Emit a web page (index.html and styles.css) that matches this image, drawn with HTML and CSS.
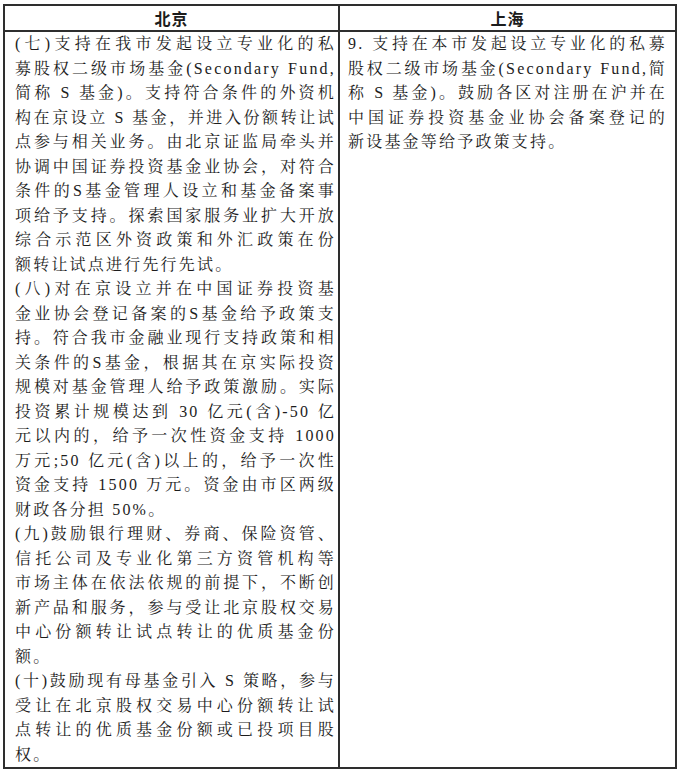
FILE: index.html
```html
<!DOCTYPE html>
<html lang="zh-CN">
<head>
<meta charset="utf-8">
<title>北京 上海 S基金政策对比</title>
<link rel="stylesheet" href="styles.css">
</head>
<body>
<div class="page">
<table class="compare">
<colgroup><col class="col-bj"><col class="col-sh"></colgroup>
<thead>
<tr><th>北京</th><th>上海</th></tr>
</thead>
<tbody>
<tr>
<td class="cell cell-left">
<p class="para">
<span class="ln">(七)支持在我市发起设立专业化的私</span>
<span class="ln">募股权二级市场基金(Secondary Fund,</span>
<span class="ln">简称 S 基金)。支持符合条件的外资机</span>
<span class="ln">构在京设立 S 基金，并进入份额转让试</span>
<span class="ln">点参与相关业务。由北京证监局牵头并</span>
<span class="ln">协调中国证券投资基金业协会，对符合</span>
<span class="ln">条件的S基金管理人设立和基金备案事</span>
<span class="ln">项给予支持。探索国家服务业扩大开放</span>
<span class="ln">综合示范区外资政策和外汇政策在份</span>
<span class="ln last">额转让试点进行先行先试。</span>
</p>
<p class="para">
<span class="ln">(八)对在京设立并在中国证券投资基</span>
<span class="ln">金业协会登记备案的S基金给予政策支</span>
<span class="ln">持。符合我市金融业现行支持政策和相</span>
<span class="ln">关条件的S基金，根据其在京实际投资</span>
<span class="ln">规模对基金管理人给予政策激励。实际</span>
<span class="ln">投资累计规模达到 30 亿元(含)-50 亿</span>
<span class="ln">元以内的，给予一次性资金支持 1000</span>
<span class="ln">万元;50 亿元(含)以上的，给予一次性</span>
<span class="ln">资金支持 1500 万元。资金由市区两级</span>
<span class="ln last">财政各分担 50%。</span>
</p>
<p class="para">
<span class="ln">(九)鼓励银行理财、券商、保险资管、</span>
<span class="ln">信托公司及专业化第三方资管机构等</span>
<span class="ln">市场主体在依法依规的前提下，不断创</span>
<span class="ln">新产品和服务，参与受让北京股权交易</span>
<span class="ln">中心份额转让试点转让的优质基金份</span>
<span class="ln last">额。</span>
</p>
<p class="para">
<span class="ln">(十)鼓励现有母基金引入 S 策略，参与</span>
<span class="ln">受让在北京股权交易中心份额转让试</span>
<span class="ln">点转让的优质基金份额或已投项目股</span>
<span class="ln last">权。</span>
</p>
</td>
<td class="cell cell-right">
<p class="para">
<span class="ln">9. 支持在本市发起设立专业化的私募</span>
<span class="ln">股权二级市场基金(Secondary Fund,简</span>
<span class="ln">称 S 基金)。鼓励各区对注册在沪并在</span>
<span class="ln">中国证券投资基金业协会备案登记的</span>
<span class="ln last">新设基金等给予政策支持。</span>
</p>
</td>
</tr>
</tbody>
</table>
</div>
</body>
</html>
```

FILE: styles.css
```css
html, body {
  margin: 0;
  padding: 0;
  background: #ffffff;
}

.page {
  padding: 4px 3px 0 3px;
}

.compare {
  width: 672px;
  table-layout: fixed;
  border-collapse: collapse;
  border: 2px solid #2e2e2e;
  font-family: "Liberation Serif", "Noto Serif CJK SC", "Noto Sans CJK SC", serif;
  color: #1c1c1c;
}

.col-bj { width: 335px; }
.col-sh { width: 337px; }

.compare th {
  height: 24px;
  padding: 0;
  border: 2px solid #2e2e2e;
  font-family: "Noto Sans CJK SC", sans-serif;
  font-size: 16px;
  font-weight: 700;
  line-height: 24px;
  text-align: center;
  letter-spacing: 1px;
}

.cell {
  vertical-align: top;
  border: 2px solid #2e2e2e;
  font-size: 16px;
  line-height: 24.5px;
  letter-spacing: 2.2px;
}

.cell-left {
  padding: 0 2px 0 10px;
}

.cell-right {
  padding: 0 8px 0 8px;
}

.para {
  margin: 0;
  text-align: justify;
}

.ln {
  display: block;
  text-align-last: justify;
}

.ln.last {
  text-align-last: auto;
}
```
